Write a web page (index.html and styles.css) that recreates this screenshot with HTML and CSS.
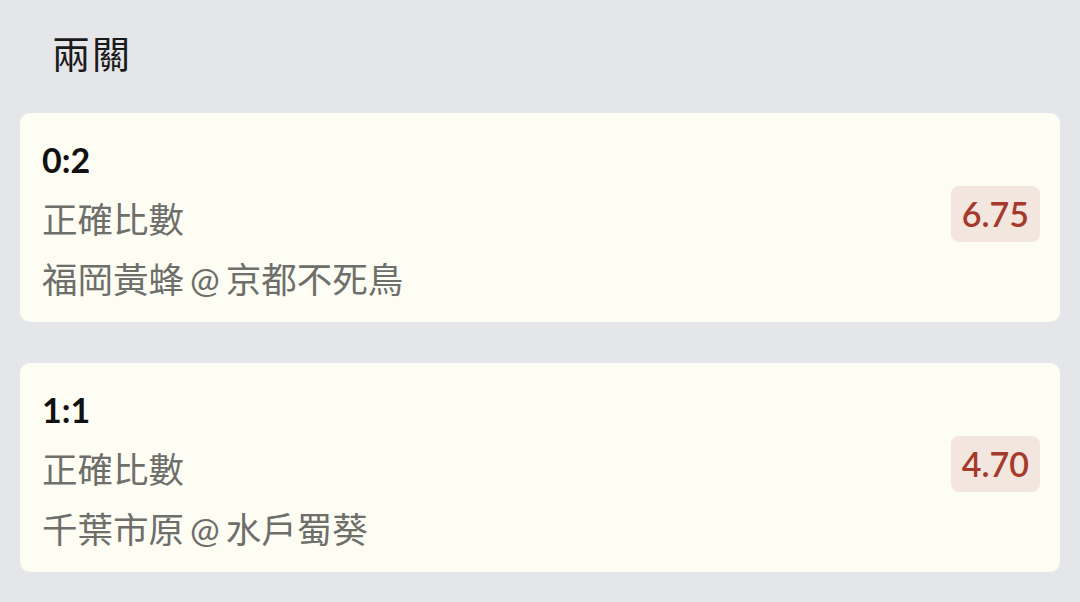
FILE: index.html
```html
<!DOCTYPE html>
<html lang="zh-Hant">
<head>
<meta charset="utf-8">
<link rel="stylesheet" href="styles.css">
</head>
<body>
<div class="page">
  <h1 class="title">兩關</h1>
  <div class="list">
    <div class="card">
      <div class="info">
        <div class="score">0:2</div>
        <div class="line">正確比數</div>
        <div class="line">福岡黃蜂 @ 京都不死鳥</div>
      </div>
      <div class="odds">6.75</div>
    </div>
    <div class="card">
      <div class="info">
        <div class="score">1:1</div>
        <div class="line">正確比數</div>
        <div class="line">千葉市原 @ 水戶蜀葵</div>
      </div>
      <div class="odds">4.70</div>
    </div>
  </div>
</div>
</body>
</html>
```
FILE: styles.css
```css
html, body {
  margin: 0;
  padding: 0;
  background: #e5e6e9;
}
body {
  font-family: Lato, "Noto Sans CJK TC", sans-serif;
  width: 1080px;
  height: 602px;
  overflow: hidden;
}
.page {
  padding: 0 20px;
}
.title {
  margin: 0;
  padding: 29px 0 0 32px;
  height: 113px;
  box-sizing: border-box;
  font-size: 38px;
  letter-spacing: 2px;
  line-height: 48px;
  font-weight: 400;
  color: #1a1a1a;
}
.list {
  display: flex;
  flex-direction: column;
  gap: 41px;
}
.card {
  background: #fdfdf4;
  border-radius: 10px;
  height: 209px;
  box-sizing: border-box;
  padding: 17px 20px 12px 22px;
  display: flex;
  align-items: center;
  justify-content: space-between;
}
.info {
  display: flex;
  flex-direction: column;
}
.score {
  font-size: 34px;
  font-weight: 700;
  line-height: 60px;
  color: #111;
}
.line {
  font-size: 35.5px;
  line-height: 60px;
  word-spacing: -3px;
  color: #6e6e6a;
}
.odds {
  background: #f3e6de;
  color: #a53a2c;
  border-radius: 8px;
  font-size: 34px;
  font-weight: 600;
  line-height: 56px;
  padding: 0 11px;
  margin-top: -12px;
}
```
